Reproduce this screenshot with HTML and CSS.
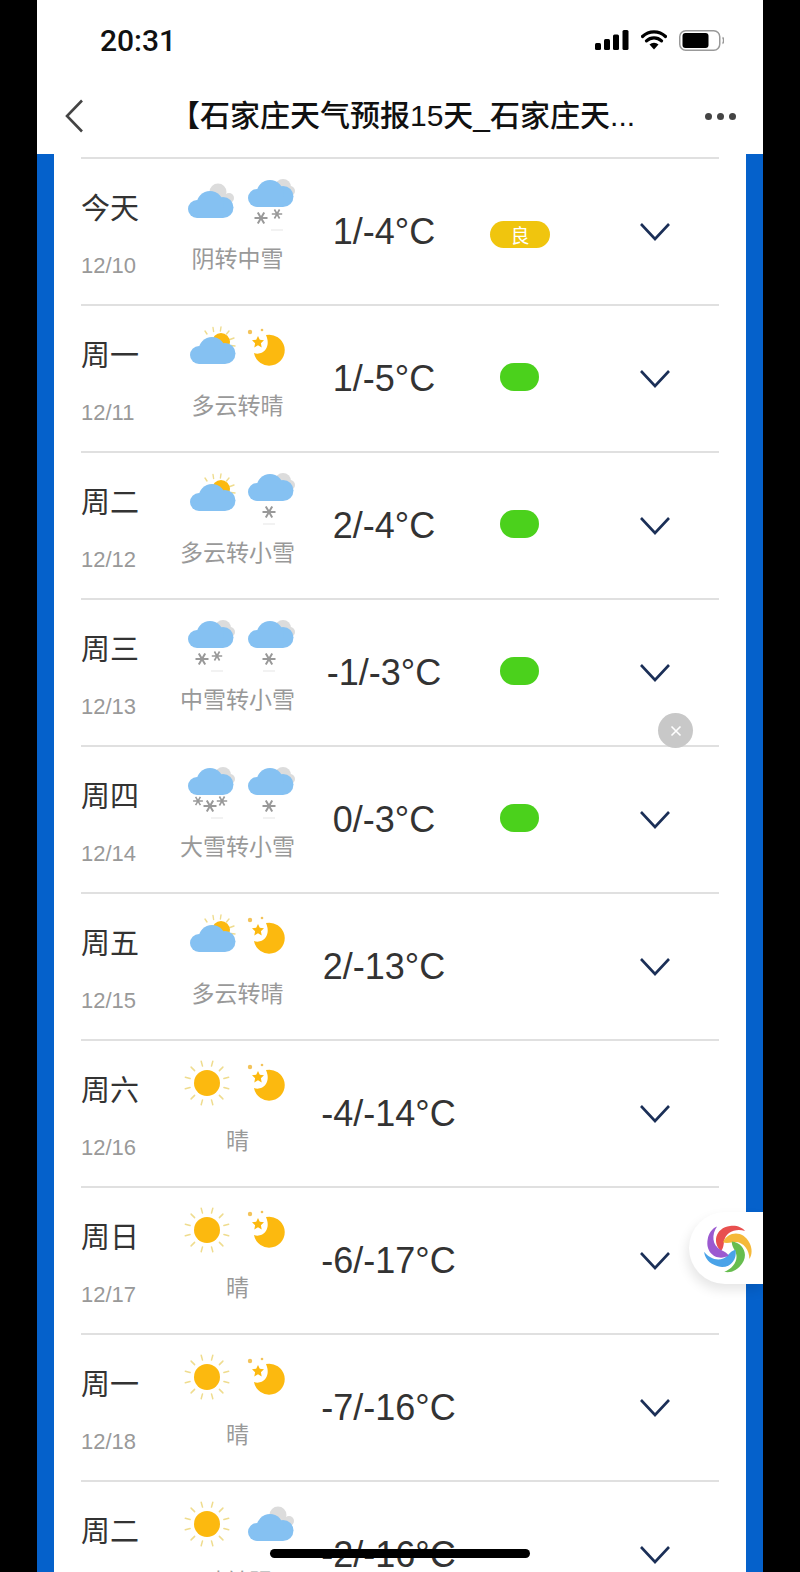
FILE: index.html
```html
<!DOCTYPE html>
<html lang="zh">
<head>
<meta charset="utf-8">
<title>石家庄天气预报15天</title>
<link rel="stylesheet" href="styles.css">
</head>
<body>
<svg class="defs" width="0" height="0" aria-hidden="true">
  <defs>
    <g id="cloud-shape">
      <circle cx="9" cy="18" r="9"/>
      <circle cx="35" cy="16.500" r="10.500"/>
      <circle cx="22" cy="13.500" r="13.500"/>
      <rect x="9" y="14" width="26" height="13"/>
    </g>
    <g id="flake" fill="none" stroke="#999" stroke-width="2">
      <path d="M-6.500 0H6.500M-3.200-5.600L3.200 5.600M-3.200 5.600L3.200-5.600"/>
    </g>
    <symbol id="sun" viewBox="0 0 60 60">
      <path d="M44.900 28.500L49.700 29.800M40.400 36.400L43.900 39.900M32.500 40.900L33.800 45.700M23.500 40.900L22.200 45.700M15.600 36.400L12.100 39.900M11.100 28.500L6.300 29.800M11.100 19.500L6.300 18.200M15.600 11.600L12.100 8.100M23.500 7.100L22.200 2.300M32.500 7.100L33.800 2.300M40.400 11.600L43.900 8.100M44.900 19.500L49.700 18.200" stroke="#efdc8e" stroke-width="1.500" stroke-linecap="round"/>
      <circle cx="28" cy="24" r="13" fill="#fcb90f"/>
    </symbol>
    <symbol id="moon" viewBox="0 0 60 60">
      <path d="M29 11A15.500 15.500 0 1 1 17 29C24 32 35 25 29 11z" fill="#fcb90f"/>
      <path d="M21 12l1.800 3.800 4.200.5-3.100 2.900.8 4.200-3.700-2.100-3.700 2.100.8-4.200-3.100-2.900 4.200-.5z" fill="#fcb90f"/>
      <circle cx="13" cy="8" r="2.200" fill="#f3c35a"/>
      <circle cx="25" cy="6" r="1.300" fill="#f3c35a"/>
    </symbol>
    <symbol id="cloudy-sun" viewBox="0 0 60 60">
      <path d="M26 7l2 3M34 3.500l.6 4M42 3l-.6 4M50 7l-2.500 3M55 14l-4 1.500M56 22l-4-.5" stroke="#efdc8e" stroke-width="1.400" stroke-linecap="round"/>
      <circle cx="42" cy="18" r="9" fill="#fcb90f"/>
      <use href="#cloud-shape" x="11" y="13" fill="#85c1f2"/>
    </symbol>
    <symbol id="overcast" viewBox="0 0 60 60">
      <circle cx="39" cy="15" r="8.500" fill="#dcdcdc"/>
      <circle cx="50" cy="21" r="5" fill="#dcdcdc"/>
      <rect x="36" y="20" width="14" height="6" fill="#dcdcdc"/>
      <use href="#cloud-shape" x="9" y="14" fill="#85c1f2"/>
    </symbol>
    <symbol id="cloud-snowy" viewBox="0 0 60 60">
      <circle cx="46" cy="10" r="8" fill="#dcdcdc"/>
      <circle cx="53" cy="14" r="5" fill="#dcdcdc"/>
      <use href="#cloud-shape" x="11" y="3" fill="#85c1f2"/>
    </symbol>
  </defs>
</svg>

<main class="phone">
  <header class="top">
    <div class="status">
      <span class="time">20:31</span>
      <div class="status-icons">
        <svg class="signal" viewBox="0 0 34 20" width="34" height="20"><rect x="0" y="13" width="6" height="7" rx="1.500"/><rect x="9" y="9" width="6" height="11" rx="1.500"/><rect x="18" y="4.500" width="6" height="15.500" rx="1.500"/><rect x="27.500" y="0" width="6" height="20" rx="1.500"/></svg>
        <svg class="wifi" viewBox="0 0 26 20" width="26" height="20"><path d="M1.500 6.500a16.500 16.500 0 0 1 23 0M5.500 10.800a11 11 0 0 1 15 0" fill="none" stroke="#000" stroke-width="3.200" stroke-linecap="round"/><path d="M13 19.500l-4.500-5a6.500 6.500 0 0 1 9 0z"/></svg>
        <svg class="battery" viewBox="0 0 45 21" width="45" height="21"><rect x=".75" y=".75" width="40" height="19.500" rx="6" fill="none" stroke="#999" stroke-width="1.500"/><rect x="3.500" y="3" width="26" height="15" rx="3"/><path d="M43.500 7.500c1.500.7 1.500 5.300 0 6" fill="none" stroke="#999" stroke-width="1.500"/></svg>
      </div>
    </div>
    <nav class="nav">
      <svg class="back" viewBox="0 0 20 34" width="20" height="34"><path d="M18 1.500L3 17l15 15.500" fill="none" stroke="#444" stroke-width="2.600"/></svg>
      <h1 class="title">【石家庄天气预报15天_石家庄天...</h1>
      <div class="dots"><i></i><i></i><i></i></div>
    </nav>
  </header>

  <div class="frame">
    <section class="list">
      <article class="row">
        <div class="day"><span class="name">今天</span><span class="date">12/10</span></div>
        <div class="weather">
          <div class="icons">
            <svg class="wi"><use href="#overcast"/></svg>
            <svg class="wi"><use href="#cloud-snowy"/><use href="#flake" transform="translate(24 41)"/><use href="#flake" transform="translate(40 37) scale(.8)"/><path class="dash" d="M34 53h12"/></svg>
          </div>
          <span class="desc">阴转中雪</span>
        </div>
        <div class="temp">1/-4°C</div>
        <div class="aqi"><span class="pill good">良</span></div>
        <svg class="chev" viewBox="0 0 32 20" width="32" height="20"><path d="M2 2l14 15L30 2"/></svg>
      </article>

      <article class="row">
        <div class="day"><span class="name">周一</span><span class="date">12/11</span></div>
        <div class="weather">
          <div class="icons">
            <svg class="wi"><use href="#cloudy-sun"/></svg>
            <svg class="wi"><use href="#moon"/></svg>
          </div>
          <span class="desc">多云转晴</span>
        </div>
        <div class="temp">1/-5°C</div>
        <div class="aqi"><span class="pill great"></span></div>
        <svg class="chev" viewBox="0 0 32 20" width="32" height="20"><path d="M2 2l14 15L30 2"/></svg>
      </article>

      <article class="row">
        <div class="day"><span class="name">周二</span><span class="date">12/12</span></div>
        <div class="weather">
          <div class="icons">
            <svg class="wi"><use href="#cloudy-sun"/></svg>
            <svg class="wi"><use href="#cloud-snowy"/><use href="#flake" transform="translate(32 41)"/><path class="dash" d="M26 53h12"/></svg>
          </div>
          <span class="desc">多云转小雪</span>
        </div>
        <div class="temp">2/-4°C</div>
        <div class="aqi"><span class="pill great"></span></div>
        <svg class="chev" viewBox="0 0 32 20" width="32" height="20"><path d="M2 2l14 15L30 2"/></svg>
      </article>

      <article class="row">
        <div class="day"><span class="name">周三</span><span class="date">12/13</span></div>
        <div class="weather">
          <div class="icons">
            <svg class="wi"><use href="#cloud-snowy" x="-2"/><use href="#flake" transform="translate(23 41)"/><use href="#flake" transform="translate(38 38) scale(.8)"/><path class="dash" d="M32 53h12"/></svg>
            <svg class="wi"><use href="#cloud-snowy"/><use href="#flake" transform="translate(32 41)"/><path class="dash" d="M26 53h12"/></svg>
          </div>
          <span class="desc">中雪转小雪</span>
        </div>
        <div class="temp">-1/-3°C</div>
        <div class="aqi"><span class="pill great"></span></div>
        <svg class="chev" viewBox="0 0 32 20" width="32" height="20"><path d="M2 2l14 15L30 2"/></svg>
      </article>

      <article class="row">
        <div class="day"><span class="name">周四</span><span class="date">12/14</span></div>
        <div class="weather">
          <div class="icons">
            <svg class="wi"><use href="#cloud-snowy" x="-2"/><use href="#flake" transform="translate(19 36) scale(.75)"/><use href="#flake" transform="translate(31 41)"/><use href="#flake" transform="translate(43 36) scale(.8)"/><path class="dash" d="M32 53h12"/></svg>
            <svg class="wi"><use href="#cloud-snowy"/><use href="#flake" transform="translate(32 41)"/><path class="dash" d="M26 53h12"/></svg>
          </div>
          <span class="desc">大雪转小雪</span>
        </div>
        <div class="temp">0/-3°C</div>
        <div class="aqi"><span class="pill great"></span></div>
        <svg class="chev" viewBox="0 0 32 20" width="32" height="20"><path d="M2 2l14 15L30 2"/></svg>
      </article>

      <article class="row">
        <div class="day"><span class="name">周五</span><span class="date">12/15</span></div>
        <div class="weather">
          <div class="icons">
            <svg class="wi"><use href="#cloudy-sun"/></svg>
            <svg class="wi"><use href="#moon"/></svg>
          </div>
          <span class="desc">多云转晴</span>
        </div>
        <div class="temp">2/-13°C</div>
        <div class="aqi"></div>
        <svg class="chev" viewBox="0 0 32 20" width="32" height="20"><path d="M2 2l14 15L30 2"/></svg>
      </article>

      <article class="row">
        <div class="day"><span class="name">周六</span><span class="date">12/16</span></div>
        <div class="weather">
          <div class="icons">
            <svg class="wi"><use href="#sun"/></svg>
            <svg class="wi"><use href="#moon"/></svg>
          </div>
          <span class="desc">晴</span>
        </div>
        <div class="temp wide">-4/-14°C</div>
        <div class="aqi"></div>
        <svg class="chev" viewBox="0 0 32 20" width="32" height="20"><path d="M2 2l14 15L30 2"/></svg>
      </article>

      <article class="row">
        <div class="day"><span class="name">周日</span><span class="date">12/17</span></div>
        <div class="weather">
          <div class="icons">
            <svg class="wi"><use href="#sun"/></svg>
            <svg class="wi"><use href="#moon"/></svg>
          </div>
          <span class="desc">晴</span>
        </div>
        <div class="temp wide">-6/-17°C</div>
        <div class="aqi"></div>
        <svg class="chev" viewBox="0 0 32 20" width="32" height="20"><path d="M2 2l14 15L30 2"/></svg>
      </article>

      <article class="row">
        <div class="day"><span class="name">周一</span><span class="date">12/18</span></div>
        <div class="weather">
          <div class="icons">
            <svg class="wi"><use href="#sun"/></svg>
            <svg class="wi"><use href="#moon"/></svg>
          </div>
          <span class="desc">晴</span>
        </div>
        <div class="temp wide">-7/-16°C</div>
        <div class="aqi"></div>
        <svg class="chev" viewBox="0 0 32 20" width="32" height="20"><path d="M2 2l14 15L30 2"/></svg>
      </article>

      <article class="row">
        <div class="day"><span class="name">周二</span><span class="date">12/19</span></div>
        <div class="weather">
          <div class="icons">
            <svg class="wi"><use href="#sun"/></svg>
            <svg class="wi"><use href="#overcast" x="2"/></svg>
          </div>
          <span class="desc">晴转阴</span>
        </div>
        <div class="temp wide">-2/-16°C</div>
        <div class="aqi"></div>
        <svg class="chev" viewBox="0 0 32 20" width="32" height="20"><path d="M2 2l14 15L30 2"/></svg>
      </article>
    </section>
  </div>

  <button class="close" aria-label="关闭"><svg viewBox="0 0 12 12" width="12" height="12"><path d="M1.500 1.500l9 9M10.500 1.500l-9 9" stroke="#fff" stroke-width="1.600"/></svg></button>

  <aside class="float">
    <svg class="swirl" viewBox="-26 -26 52 52" width="52" height="52">
      <path d="M-7 3C-16-5-13-20 2-22 8-23 14-21 17-17 8-20-3-16-4-6-4.500-2-5 1-7 3z" fill="#e8504f"/>
      <path d="M-7 3C-16-5-13-20 2-22 8-23 14-21 17-17 8-20-3-16-4-6-4.500-2-5 1-7 3z" fill="#f5b93a" transform="rotate(72)"/>
      <path d="M-7 3C-16-5-13-20 2-22 8-23 14-21 17-17 8-20-3-16-4-6-4.500-2-5 1-7 3z" fill="#67bd4f" transform="rotate(144)"/>
      <path d="M-7 3C-16-5-13-20 2-22 8-23 14-21 17-17 8-20-3-16-4-6-4.500-2-5 1-7 3z" fill="#4aa3e8" transform="rotate(216)"/>
      <path d="M-7 3C-16-5-13-20 2-22 8-23 14-21 17-17 8-20-3-16-4-6-4.500-2-5 1-7 3z" fill="#9b59d0" transform="rotate(288)"/>
    </svg>
  </aside>

  <div class="home-bar"></div>
</main>
</body>
</html>
```

FILE: styles.css
```css
* { box-sizing: border-box; }

html, body {
  margin: 0;
  height: 1572px;
  overflow: hidden;
  background: #000;
}

body {
  font-family: "Liberation Sans", "Noto Sans CJK SC", sans-serif;
  color: #333;
}

.defs { position: absolute; }

.phone {
  position: relative;
  width: 726px;
  height: 1572px;
  margin-left: 37px;
  background: #0561cb;
  overflow: hidden;
}

/* Header */
.top { height: 154px; background: #fff; }

.status {
  height: 80px;
  display: flex;
  align-items: center;
  justify-content: space-between;
  padding: 0 39px 0 63px;
}

.time {
  font-family: Roboto, "Liberation Sans", sans-serif;
  font-weight: 500;
  font-size: 30px;
  color: #111;
}

.status-icons { display: flex; align-items: center; gap: 12px; }

.nav {
  height: 74px;
  display: flex;
  align-items: center;
  padding: 0 27px 2px 27px;
}

.back { flex: none; }

.title {
  margin: 0 0 0 86px;
  font-size: 30px;
  font-weight: 500;
  line-height: 40px;
  color: #111;
  white-space: nowrap;
}

.dots { margin-left: auto; display: flex; gap: 5px; }
.dots i { width: 7px; height: 7px; border-radius: 50%; background: #444; }

/* Frame + list */
.frame { margin: 0 17px; padding: 3px 27px 0; background: #fff; height: 1418px; }

.row {
  height: 147px;
  border-top: 2px solid #e0e0e0;
  display: flex;
  align-items: center;
}

.day {
  flex: none;
  width: 91px;
  align-self: flex-start;
  display: flex;
  flex-direction: column;
}

.name {
  margin-top: 30px;
  font-size: 29px;
  line-height: 40px;
  color: #333;
}

.date {
  margin-top: 22px;
  font-size: 22px;
  line-height: 30px;
  color: #999;
}

.weather {
  flex: none;
  width: 131px;
  align-self: flex-start;
  padding-top: 18px;
  display: flex;
  flex-direction: column;
  align-items: center;
}

.icons { display: flex; width: 118px; height: 60px; }
.wi { flex: none; width: 60px; height: 60px; margin-right: -2px; overflow: visible; }
.wi use { width: 60px; height: 60px; }

.dash { stroke: #eee; stroke-width: 1.500; fill: none; }

.desc {
  margin-top: 7px;
  font-size: 23px;
  line-height: 30px;
  color: #999;
  white-space: nowrap;
}

.temp {
  flex: none;
  width: 162px;
  text-align: center;
  font-size: 36px;
  color: #333;
  white-space: nowrap;
}

.temp.wide { padding-left: 9px; }

.aqi {
  flex: none;
  width: 108px;
  height: 30px;
  margin-top: 3px;
  display: flex;
  justify-content: center;
  align-items: center;
}

.pill {
  display: flex;
  align-items: center;
  justify-content: center;
  border-radius: 14px;
  font-size: 19px;
  color: #fff;
}

.pill.good { width: 60px; height: 27px; margin: 3px 0 0 2px; background: #f0c50e; }
.pill.great { width: 39px; height: 28px; margin-top: -6px; background: #4bd11c; }

.chev {
  flex: none;
  margin-left: 66px;
  fill: none;
  stroke: #1b2f57;
  stroke-width: 2.600;
}

/* Overlays */
.close {
  position: absolute;
  left: 621px;
  top: 713px;
  width: 35px;
  height: 35px;
  padding: 0;
  border: 0;
  border-radius: 50%;
  background: #c8c8c8;
  display: flex;
  align-items: center;
  justify-content: center;
}

.float {
  position: absolute;
  right: 0;
  top: 1212px;
  width: 74px;
  height: 72px;
  background: #fff;
  border-radius: 36px 0 0 36px;
  box-shadow: -2px 6px 12px rgba(0, 0, 0, .1);
  display: flex;
  align-items: center;
  justify-content: center;
  padding-left: 4px;
}

.home-bar {
  position: absolute;
  left: 233px;
  top: 1549px;
  width: 260px;
  height: 9px;
  border-radius: 5px;
  background: #000;
}
```
